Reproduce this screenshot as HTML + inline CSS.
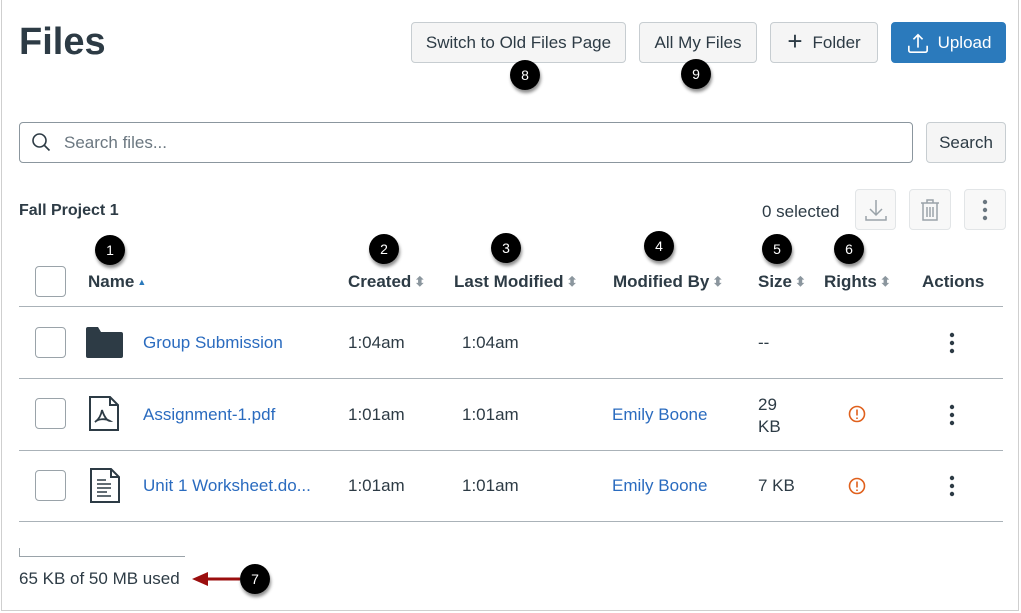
<!DOCTYPE html>
<html><head><style>
*{margin:0;padding:0;box-sizing:border-box}
body{width:1021px;height:613px;background:#fff;font-family:"Liberation Sans",sans-serif;color:#2d3b45;position:relative;overflow:hidden}
.frame{position:absolute;left:1px;top:0;width:1018px;height:611px;border:1px solid #cfcfcf;border-top:none}
.a{position:absolute}
.btn{position:absolute;background:#f5f5f5;border:1px solid #c7cdd1;border-radius:4px;font-size:17px;color:#2d3b45;display:flex;align-items:center;justify-content:center}
.badge{position:absolute;width:30px;height:30px;border-radius:50%;background:#000;color:#fff;font-size:14px;display:flex;align-items:center;justify-content:center;box-shadow:1px 3px 3px rgba(0,0,0,.45)}
.th{position:absolute;top:272px;font-size:17px;font-weight:bold;color:#2d3b45}
.sort{color:#8b969e;font-size:13px;margin-left:3px;vertical-align:1px}
.cb{position:absolute;left:35px;width:31px;height:31px;border:1px solid #9aa3a9;border-radius:4px}
.line{position:absolute;left:19px;width:984px;height:1px;background:#aab2b8}
.t{position:absolute;font-size:17px}
.lk{color:#2a6bbf}
</style></head><body>
<div class="frame"></div>
<div class="a" style="left:19px;top:21px;font-size:38px;font-weight:bold">Files</div>
<div class="btn" style="left:411px;top:22px;width:215px;height:41px">Switch to Old Files Page</div>
<div class="btn" style="left:639px;top:22px;width:118px;height:41px">All My Files</div>
<div class="btn" style="left:770px;top:22px;width:108px;height:41px"><span style="font-size:26px;font-weight:300;margin-right:10px;margin-top:-3px">+</span>Folder</div>
<div class="btn" style="left:891px;top:22px;width:115px;height:41px;background:#2b7abc;border-color:#2b7abc;color:#fff">
<svg width="24" height="22" viewBox="0 0 26 24" style="margin-right:8px" fill="none" stroke="#fff" stroke-width="1.8"><path d="M13 17V3M8 8l5-5 5 5M3 15v5a2 2 0 0 0 2 2h16a2 2 0 0 0 2-2v-5"/></svg>Upload</div>
<div class="badge" style="left:510px;top:60px">8</div>
<div class="badge" style="left:681px;top:59px">9</div>
<div class="a" style="left:19px;top:122px;width:894px;height:41px;border:1px solid #8b969e;border-radius:4px"></div>
<svg class="a" style="left:31px;top:132px" width="20" height="20" fill="none" stroke="#2d3b45" stroke-width="1.6"><circle cx="8.5" cy="8.5" r="6.5"/><path d="M13.5 13.5l5 5"/></svg>
<div class="t" style="left:64px;top:133px;color:#6b7780">Search files...</div>
<div class="btn" style="left:926px;top:122px;width:80px;height:41px">Search</div>
<div class="t" style="left:19px;top:202px;font-size:16px;font-weight:bold">Fall Project 1</div>
<div class="t" style="left:762px;top:202px">0 selected</div>
<div class="btn" style="left:855px;top:189px;width:41px;height:41px;background:#f8f8f8;border-color:#e2e5e7"><svg width="24" height="26" fill="none" stroke="#9aa3a9" stroke-width="1.5"><path d="M12 3v15M6 12l6 6 6-6M2 19v4h20v-4"/></svg></div>
<div class="btn" style="left:909px;top:189px;width:42px;height:41px;background:#f8f8f8;border-color:#e2e5e7"><svg width="24" height="26" fill="none" stroke="#9aa3a9" stroke-width="1.5"><path d="M3 6h18M9 6V3h6v3M5 6v17h14V6M9 10v10M12 10v10M15 10v10"/></svg></div>
<div class="btn" style="left:964px;top:189px;width:42px;height:41px;background:#f8f8f8;border-color:#e2e5e7"><svg width="6" height="22" fill="#6b7780"><circle cx="3" cy="3" r="2.2"/><circle cx="3" cy="11" r="2.2"/><circle cx="3" cy="19" r="2.2"/></svg></div>
<div class="badge" style="left:95px;top:235px">1</div>
<div class="badge" style="left:369px;top:234px">2</div>
<div class="badge" style="left:491px;top:233px">3</div>
<div class="badge" style="left:644px;top:231px">4</div>
<div class="badge" style="left:762px;top:234px">5</div>
<div class="badge" style="left:834px;top:234px">6</div>
<div class="cb" style="top:266px"></div>
<div class="th" style="left:88px">Name<span class="sort" style="color:#2b7abc;font-size:9px;vertical-align:2px">▲</span></div>
<div class="th" style="left:348px">Created<span class="sort">⬍</span></div>
<div class="th" style="left:454px">Last Modified<span class="sort">⬍</span></div>
<div class="th" style="left:613px">Modified By<span class="sort">⬍</span></div>
<div class="th" style="left:758px">Size<span class="sort">⬍</span></div>
<div class="th" style="left:824px">Rights<span class="sort">⬍</span></div>
<div class="th" style="left:922px">Actions</div>
<div class="line" style="top:306px"></div>
<div class="line" style="top:378px"></div>
<div class="line" style="top:450px"></div>
<div class="line" style="top:521px"></div>
<div class="cb" style="top:327px"></div>
<svg class="a" style="left:85px;top:326px" width="38" height="32"><path d="M1 3a2 2 0 0 1 2-2h10l3 5h20a2 2 0 0 1 2 2v22a2 2 0 0 1-2 2H3a2 2 0 0 1-2-2z" fill="#2d3b45"/></svg>
<div class="t lk" style="left:143px;top:333px">Group Submission</div>
<div class="t" style="left:348px;top:333px">1:04am</div>
<div class="t" style="left:462px;top:333px">1:04am</div>
<div class="t" style="left:758px;top:333px">--</div>
<svg class="a" style="left:949px;top:332px" width="6" height="22" fill="#2d3b45"><circle cx="3" cy="3" r="2.2"/><circle cx="3" cy="11" r="2.2"/><circle cx="3" cy="19" r="2.2"/></svg>
<div class="cb" style="top:398px"></div>
<svg class="a" style="left:88px;top:396px" width="32" height="36" fill="none" stroke="#2d3b45" stroke-width="2"><path d="M2 1h20l8 8v25H2z M22 1v8h8"/><path d="M14 14c-1 6-4 10-7 12 3-3 10-4 15-1-3 0-6-5-8-11z" stroke-width="1.8"/></svg>
<div class="t lk" style="left:143px;top:405px">Assignment-1.pdf</div>
<div class="t" style="left:348px;top:405px">1:01am</div>
<div class="t" style="left:462px;top:405px">1:01am</div>
<div class="t lk" style="left:612px;top:405px">Emily Boone</div>
<div class="t" style="left:758px;top:394px;line-height:22px">29<br>KB</div>
<svg class="a" style="left:848px;top:405px" width="18" height="18" fill="none" stroke="#e0601c" stroke-width="1.6"><circle cx="9" cy="9" r="7.5"/><path d="M9 4.5v6M9 12.5v1.5"/></svg>
<svg class="a" style="left:949px;top:404px" width="6" height="22" fill="#2d3b45"><circle cx="3" cy="3" r="2.2"/><circle cx="3" cy="11" r="2.2"/><circle cx="3" cy="19" r="2.2"/></svg>
<div class="cb" style="top:470px"></div>
<svg class="a" style="left:89px;top:468px" width="32" height="36" fill="none" stroke="#2d3b45" stroke-width="2"><path d="M2 1h20l8 8v25H2z M22 1v8h8"/><path d="M8 12h9M8 16h14M8 20h14M8 24h10M8 28h14" stroke-width="1.6"/></svg>
<div class="t lk" style="left:143px;top:476px">Unit 1 Worksheet.do...</div>
<div class="t" style="left:348px;top:476px">1:01am</div>
<div class="t" style="left:462px;top:476px">1:01am</div>
<div class="t lk" style="left:612px;top:476px">Emily Boone</div>
<div class="t" style="left:758px;top:476px">7 KB</div>
<svg class="a" style="left:848px;top:477px" width="18" height="18" fill="none" stroke="#e0601c" stroke-width="1.6"><circle cx="9" cy="9" r="7.5"/><path d="M9 4.5v6M9 12.5v1.5"/></svg>
<svg class="a" style="left:949px;top:475px" width="6" height="22" fill="#2d3b45"><circle cx="3" cy="3" r="2.2"/><circle cx="3" cy="11" r="2.2"/><circle cx="3" cy="19" r="2.2"/></svg>
<div class="a" style="left:19px;top:548px;width:1px;height:9px;background:#9aa3a9"></div>
<div class="a" style="left:19px;top:556px;width:166px;height:1px;background:#9aa3a9"></div>
<div class="t" style="left:19px;top:569px;font-size:17px">65 KB of 50 MB used</div>
<svg class="a" style="left:192px;top:571px" width="50" height="16"><path d="M14 8h34" stroke="#9b0e0e" stroke-width="3"/><path d="M0 8l16-7v14z" fill="#9b0e0e"/></svg>
<div class="badge" style="left:240px;top:564px">7</div>
</body></html>
